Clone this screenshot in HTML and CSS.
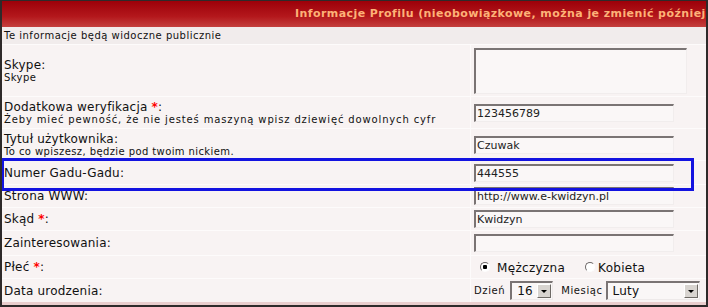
FILE: index.html
```html
<!DOCTYPE html>
<html lang="pl">
<head>
  <meta charset="UTF-8" />
  <title>Informacje Profilu</title>
  <link rel="stylesheet" href="styles.css">
</head>
<body>
  <div class="panel">
    <div class="panel-head">Informacje Profilu (nieobowiązkowe, można je zmienić później)</div>
    <form class="form">
      <div class="note">Te informacje będą widoczne publicznie</div>

      <div class="row h51">
        <div class="label"><span class="name">Skype:</span><span class="desc">Skype</span></div>
        <div class="field"><textarea class="area"></textarea></div>
      </div>

      <div class="row h31">
        <div class="label">
          <span class="name">Dodatkowa weryfikacja <b class="req">*</b>:</span>
          <span class="desc desc-wide">Żeby mieć pewność, że nie jesteś maszyną wpisz dziewięć dowolnych cyfr</span>
        </div>
        <div class="field"><input class="text" type="text" value="123456789"></div>
      </div>

      <div class="row h31">
        <div class="label">
          <span class="name">Tytuł użytkownika:</span>
          <span class="desc">To co wpiszesz, będzie pod twoim nickiem.</span>
        </div>
        <div class="field"><input class="text" type="text" value="Czuwak"></div>
      </div>

      <div class="row h23">
        <div class="label"><span class="name">Numer Gadu-Gadu:</span></div>
        <div class="field"><input class="text" type="text" value="444555"></div>
      </div>

      <div class="row h22">
        <div class="label"><span class="name">Strona WWW:</span></div>
        <div class="field"><input class="text" type="text" value="http://www.e-kwidzyn.pl"></div>
      </div>

      <div class="row h22">
        <div class="label"><span class="name">Skąd <b class="req">*</b>:</span></div>
        <div class="field"><input class="text" type="text" value="Kwidzyn"></div>
      </div>

      <div class="row h24">
        <div class="label"><span class="name">Zainteresowania:</span></div>
        <div class="field"><input class="text" type="text" value=""></div>
      </div>

      <div class="row h22">
        <div class="label"><span class="name">Płeć <b class="req">*</b>:</span></div>
        <div class="field radios">
          <label class="opt"><input type="radio" name="sex" checked> Mężczyzna</label>
          <label class="opt opt-2"><input type="radio" name="sex">Kobieta</label>
        </div>
      </div>

      <div class="row h23">
        <div class="label"><span class="name">Data urodzenia:</span></div>
        <div class="field date">
          <span class="small">Dzień</span>
          <span class="select sel-day"><span class="select-val">16</span><span class="select-btn"></span></span>
          <span class="small small-gap">Miesiąc</span>
          <span class="select sel-month"><span class="select-val">Luty</span><span class="select-btn"></span></span>
        </div>
      </div>
    </form>
    <div class="panel-foot"></div>
    <div class="highlight"></div>
  </div>
</body>
</html>
```

FILE: styles.css
```css
* { box-sizing: border-box; margin: 0; padding: 0; }
body { font-family: 'DejaVu Sans', Verdana, sans-serif; background: #fff; color: #111; }

.panel {
  position: relative;
  width: 708px; height: 307px; overflow: hidden;
  border: 2px solid #2e2a2a; border-top-width: 1px;
  background: #fdfbfb;
}
.panel-head {
  height: 26px; line-height: 26px;
  padding-left: 293px; white-space: nowrap; overflow: hidden;
  background: linear-gradient(#9c0009, #b4181c 60%, #c4403e);
  color: #fdb277; font-weight: 700; font-size: 11px; letter-spacing: 0.42px;
}
.form { display: flex; flex-direction: column; gap: 1px; background: #fdfbfb; }
.note {
  height: 17px; line-height: 17px; padding-left: 2px;
  font-size: 10px; letter-spacing: 0.5px; background: #f1ecec;
}
.row { display: grid; grid-template-columns: 468px 1fr; column-gap: 1px; }
.h51 { height: 51px; }
.h31 { height: 31px; }
.h24 { height: 24px; }
.h23 { height: 23px; }
.h22 { height: 22px; }

.label {
  display: flex; flex-direction: column; justify-content: center;
  padding-left: 2px; background: #f8f3f3;
}
.name { font-size: 12px; line-height: 14px; letter-spacing: 0.2px; }
.desc { font-size: 10px; line-height: 12px; letter-spacing: 0.4px; }
.desc-wide { letter-spacing: 0.85px; }
.req { color: #f00; font-weight: 700; }

.field { display: flex; align-items: center; padding-left: 3px; background: #f8f3f3; }

.text, .area {
  width: 200px; height: 18px;
  border-style: solid; border-width: 2px 1px 1px 2px;
  border-color: #7a7474 #f1eded #f1eded #7a7474;
  background: #faf7f7; color: #222;
  font-family: 'DejaVu Sans', Verdana, sans-serif; font-size: 11px;
  padding: 0 1px; outline: none;
}
.area { width: 213px; height: 46px; resize: none; }

.radios { font-size: 12px; letter-spacing: 0.3px; padding-left: 9px; padding-top: 1px; }
.opt { display: flex; align-items: center; white-space: pre; }
.opt-2 { margin-left: 20px; }
.opt input {
  appearance: none; -webkit-appearance: none;
  width: 10px; height: 10px; border-radius: 50%;
  border: 1px solid; border-color: #6d6868 #fdfdfd #fdfdfd #6d6868;
  background: #fff; margin: 0 3px 2px 0;
}
.opt input:checked { background: radial-gradient(circle, #000 0 2px, #fff 2.5px); }

.date { font-size: 10px; letter-spacing: 0.6px; }
.small-gap { margin-left: 8px; }
.select {
  display: flex; align-items: center;
  height: 19px; margin-left: 5px;
  border-style: solid; border-width: 2px 1px 1px 2px;
  border-color: #7a7474 #eeeaea #eeeaea #7a7474;
  background: #faf7f7; font-size: 12px; letter-spacing: 0.2px;
}
.select-val { flex: 1; padding-left: 5px; }
.sel-day { width: 43px; }
.sel-month { width: 94px; margin-left: 3px; }
.select-btn {
  width: 14px; height: 14px; margin-right: 1px;
  background: #d8d4d0;
  border: 1px solid; border-color: #fff #6e6a66 #6e6a66 #fff;
  display: flex; align-items: center; justify-content: center;
}
.select-btn::after {
  content: ''; border: 3px solid transparent; border-top: 3px solid #000;
  border-bottom: 0; margin-top: 1px;
}

.panel-foot { height: 3px; background: #e9cdcd; }

.highlight {
  position: absolute; left: -1px; top: 157px;
  width: 693px; height: 33px;
  border: 3px solid #1313e0;
}
```
